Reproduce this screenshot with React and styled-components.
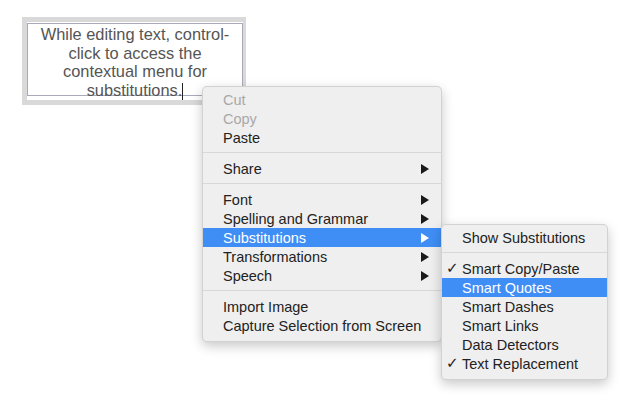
import React from "react";
import styled, { createGlobalStyle } from "styled-components";

const GlobalStyle = createGlobalStyle`
  html, body {
    margin: 0;
    padding: 0;
    background: #ffffff;
  }
  body {
    font-family: "Liberation Sans", Arial, sans-serif;
  }
`;

const Stage = styled.div`
  position: relative;
  width: 638px;
  height: 413px;
  padding: 17px 0 0 22px;
  box-sizing: border-box;
  overflow: hidden;
`;

const Frame = styled.div`
  width: 224px;
  height: 88px;
  box-sizing: border-box;
  border: 5px solid #d9d9d9;
  border-right-width: 3px;
  padding: 1px 0 4px 0;
`;

const Field = styled.div`
  height: 100%;
  box-sizing: border-box;
  border: 1px solid #a9a9b9;
  background: #fff;
  color: #555;
  font-size: 16.4px;
  line-height: 18.5px;
  text-align: center;
  padding: 1px 0 0;
  white-space: nowrap;
`;

const Caret = styled.span`
  display: inline-block;
  width: 1px;
  height: 17px;
  margin-left: 0;
  background: #222;
  vertical-align: -4px;
`;

const Menu = styled.div`
  position: absolute;
  left: ${p => p.left}px;
  top: ${p => p.top}px;
  width: ${p => p.width}px;
  box-sizing: border-box;
  padding: 3px 0 6px;
  background: #efefef;
  border: 1px solid rgba(0, 0, 0, 0.12);
  border-radius: 5px;
  box-shadow: 0 4px 12px rgba(0, 0, 0, 0.22);
  font-size: 14.5px;
  color: #222;
`;

const Item = styled.div`
  position: relative;
  display: flex;
  align-items: center;
  justify-content: space-between;
  height: 19px;
  padding: 0 12px 0 20px;
  background: ${p => (p.active ? "#3f8ef6" : "transparent")};
  color: ${p => (p.active ? "#fff" : p.disabled ? "#a8a8a8" : "#222")};
`;

const Check = styled.span`
  position: absolute;
  left: 4px;
  top: 0;
  font-family: "DejaVu Sans", sans-serif;
  font-size: 15px;
  line-height: 19px;
`;

const Arrow = styled.span`
  width: 0;
  height: 0;
  border-top: 5px solid transparent;
  border-bottom: 5px solid transparent;
  border-left: 8px solid ${p => (p.active ? "#fff" : "#1a1a1a")};
`;

const Separator = styled.div`
  height: 1px;
  margin: 5px 0 6px;
  background: #d8d8d8;
`;

function MenuItem({ label, arrow, active, disabled, checked }) {
  return (
    <Item active={active} disabled={disabled}>
      {checked && <Check>✓</Check>}
      <span>{label}</span>
      {arrow && <Arrow active={active} />}
    </Item>
  );
}

export default function App() {
  return (
    <>
      <GlobalStyle />
      <Stage>
        <Frame>
          <Field>
            While editing text, control-
            <br />
            click to access the
            <br />
            contextual menu for
            <br />
            substitutions.
            <Caret />
          </Field>
        </Frame>

        <Menu left={202} top={86} width={240}>
          <MenuItem label="Cut" disabled />
          <MenuItem label="Copy" disabled />
          <MenuItem label="Paste" />
          <Separator />
          <MenuItem label="Share" arrow />
          <Separator />
          <MenuItem label="Font" arrow />
          <MenuItem label="Spelling and Grammar" arrow />
          <MenuItem label="Substitutions" arrow active />
          <MenuItem label="Transformations" arrow />
          <MenuItem label="Speech" arrow />
          <Separator />
          <MenuItem label="Import Image" />
          <MenuItem label="Capture Selection from Screen" />
        </Menu>

        <Menu left={441} top={224} width={167}>
          <MenuItem label="Show Substitutions" />
          <Separator />
          <MenuItem label="Smart Copy/Paste" checked />
          <MenuItem label="Smart Quotes" active />
          <MenuItem label="Smart Dashes" />
          <MenuItem label="Smart Links" />
          <MenuItem label="Data Detectors" />
          <MenuItem label="Text Replacement" checked />
        </Menu>
      </Stage>
    </>
  );
}
